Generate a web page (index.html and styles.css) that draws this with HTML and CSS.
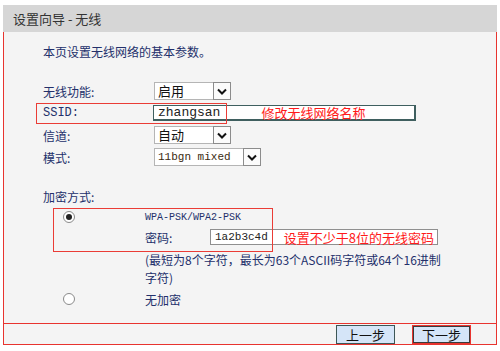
FILE: index.html
```html
<!DOCTYPE html>
<html lang="zh-CN">
<head>
  <meta charset="UTF-8" />
  <meta name="viewport" content="width=device-width, initial-scale=1.0"/>
  <title>设置向导 - 无线</title>
  <link rel="stylesheet" href="styles.css">
</head>
<body>
  <div class="page">
    <div class="title">设置向导 - 无线</div>
    <div class="panel">
      <div class="body">
        <p class="intro">本页设置无线网络的基本参数。</p>

        <div class="form">
          <div class="row">
            <span class="label">无线功能:</span>
            <div class="select sel-short">
              <span class="val">启用</span>
              <span class="arrow"><svg width="10" height="7" viewBox="0 0 10 7"><path d="M1 1.5 L5 5.5 L9 1.5" fill="none" stroke="#111" stroke-width="2"/></svg></span>
            </div>
          </div>
          <div class="row">
            <span class="label mono-label">SSID:</span>
            <div class="input input-ssid">
              <span class="mono big">zhangsan</span>
              <span class="note note-ssid">修改无线网络名称</span>
            </div>
          </div>
          <div class="row">
            <span class="label">信道:</span>
            <div class="select sel-short">
              <span class="val">自动</span>
              <span class="arrow"><svg width="10" height="7" viewBox="0 0 10 7"><path d="M1 1.5 L5 5.5 L9 1.5" fill="none" stroke="#111" stroke-width="2"/></svg></span>
            </div>
          </div>
          <div class="row">
            <span class="label">模式:</span>
            <div class="select sel-long">
              <span class="val mono">11bgn mixed</span>
              <span class="arrow"><svg width="10" height="7" viewBox="0 0 10 7"><path d="M1 1.5 L5 5.5 L9 1.5" fill="none" stroke="#111" stroke-width="2"/></svg></span>
            </div>
          </div>
        </div>

        <div class="enc">
          <div class="enc-title">加密方式:</div>
          <div class="opt opt-wpa">
            <span class="radio checked"></span>
            <span class="mono small">WPA-PSK/WPA2-PSK</span>
          </div>
          <div class="opt opt-pwd">
            <span class="radio-cell"></span>
            <span class="pwd-label">密码:</span>
            <div class="input input-pwd">
              <span class="mono">1a2b3c4d</span>
              <span class="note note-pwd">设置不少于8位的无线密码</span>
            </div>
          </div>
          <p class="help">(最短为8个字符，最长为63个ASCII码字符或64个16进制字符)</p>
          <div class="opt opt-none">
            <span class="radio"></span>
            <span>无加密</span>
          </div>
        </div>

        <!-- annotation frames drawn over the form -->
        <div class="mark mark-ssid"></div>
        <div class="mark mark-enc"></div>
      </div>

      <div class="footer">
        <button class="btn">上一步</button>
        <button class="btn btn-focus">下一步</button>
      </div>
    </div>
  </div>
</body>
</html>
```

FILE: styles.css
```css
body { margin: 0; background: #fff; font-family: "Noto Sans CJK SC", "DejaVu Sans", sans-serif; font-size: 12px; color: #23306b; }
.page { padding: 5px 3px 0 3px; }
.title { height: 27px; line-height: 27px; padding-left: 10px; background: #d6d6d6; color: #333; font-size: 13px; }
.panel { background: #f4f4f4; border-left: 1px solid #e8342f; border-right: 1px solid #e8342f; border-bottom: 1px solid #e8342f; }
.body { position: relative; padding: 10px 0 14px 39px; }
.intro { margin: 0; height: 20px; line-height: 20px; }

.form { margin-top: 18px; }
.row { display: flex; align-items: center; height: 22px; }
.label { width: 111px; }
.mono-label { font-family: "Liberation Mono", monospace; font-size: 12px; }
.mono { font-family: "Liberation Mono", monospace; font-size: 11px; color: #222; }
.mono.big { font-size: 13px; }
.mono.small { font-size: 10px; color: #23306b; }

.select { display: flex; height: 18px; background: #fff; border: 1px solid #b5b5b5; border-right: none; box-sizing: border-box; }
.sel-short { width: 77px; }
.sel-long { width: 107px; }
.select .val { flex: 1; line-height: 16px; padding-left: 3px; color: #111; font-size: 13px; }
.select .val.mono { font-size: 11px; color: #3a2a10; }
.arrow { width: 18px; height: 18px; margin-top: -1px; box-sizing: border-box; border: 1px solid #8c8c8c; background: #fbfbfb; display: flex; align-items: center; justify-content: center; }

.input { display: flex; align-items: center; height: 16px; background: #fff; box-sizing: border-box; }
.input-ssid { width: 263px; margin-left: -1px; border: 1px solid #3f5f5f; border-width: 1px 2px 2px 1px; padding-left: 4px; }
.note { color: #ff1a1a; font-size: 13px; }
.note-ssid { margin-left: 41px; }

.enc { margin-top: 18px; }
.enc-title { height: 22px; line-height: 22px; }
.opt { display: flex; align-items: center; }
.opt-wpa { height: 18px; }
.opt-pwd { height: 22px; }
.opt-none { height: 20px; margin-top: 2px; }
.radio, .radio-cell { width: 12px; height: 12px; margin: 0 70px 0 20px; flex: none; box-sizing: border-box; }
.radio { border: 1px solid #8a8a8a; border-radius: 50%; background: #fff; position: relative; }
.radio.checked::after { content: ""; position: absolute; left: 2px; top: 2px; width: 6px; height: 6px; border-radius: 50%; background: #222; }
.pwd-label { width: 65px; }
.input-pwd { width: 228px; border: 1px solid #8f8f8f; padding-left: 4px; }
.note-pwd { margin-left: 16px; }
.help { margin: 3px 0 0 102px; width: 300px; line-height: 18px; }

.mark { position: absolute; border: 1px solid #ea3c36; }
.mark-ssid { left: 32px; top: 71px; width: 189px; height: 19px; }
.mark-enc { left: 49px; top: 176px; width: 218px; height: 42px; }

.footer { display: flex; justify-content: flex-end; gap: 17px; padding: 1px 25px 0 0; height: 21px; box-sizing: border-box; border-top: 1px solid #e8342f; }
.btn { width: 59px; height: 19px; padding: 0; background: #d5e5f8; border: 1px solid #3d5656; color: #111; font-family: "Noto Sans CJK SC", sans-serif; font-size: 13px; line-height: 15px; }
.btn-focus { border-color: #e8342f; box-shadow: inset 0 0 0 1px #3a3a3a; }
```
